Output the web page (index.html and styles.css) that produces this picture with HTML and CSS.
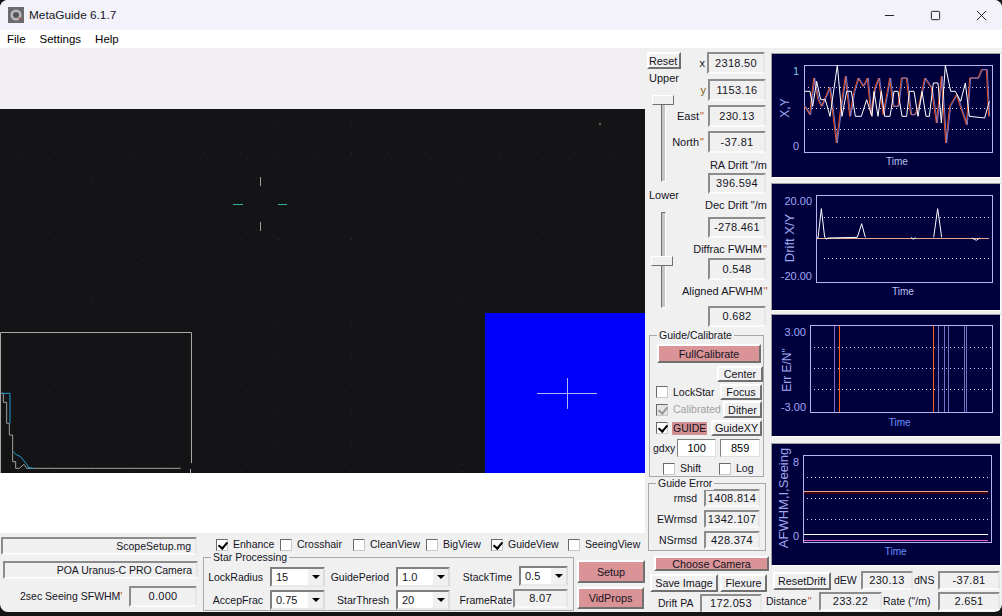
FILE: index.html
```html
<!DOCTYPE html>
<html>

<head>
    <title>MetaGuide 6.1.7</title>
    <link rel="stylesheet" href="styles.css">
</head>

<body>
    <div class="window">
        <div class="titlebar">
            <svg class="app-icon" viewBox="0 0 16 16" aria-hidden="true">
                <rect width="16" height="16" fill="#6b6b6d"></rect>
                <circle cx="8" cy="8" r="5.5" fill="#b9b9bb"></circle>
                <circle cx="8" cy="8" r="3" fill="#58585a"></circle>
                <circle cx="11.5" cy="11.5" r="1" fill="#c04040"></circle>
            </svg>
            <span class="app-title">MetaGuide 6.1.7</span>
            <div class="window-buttons">
                <span class="win-btn"><svg viewBox="0 0 12 12" aria-hidden="true"><path d="M1 6h10"></path></svg></span>
                <span class="win-btn"><svg viewBox="0 0 12 12" aria-hidden="true"><rect x="1.5" y="1.5" width="9" height="9" rx="1"></rect></svg></span>
                <span class="win-btn"><svg viewBox="0 0 12 12" aria-hidden="true"><path d="M1 1l10 10M11 1L1 11"></path></svg></span>
            </div>
        </div>
        <div class="menubar">
            <span>File</span>
            <span>Settings</span>
            <span>Help</span>
        </div>

        <div class="workarea">
            <div class="left-col">
                <div class="top-gap"></div>
                <div class="video">
                    <svg class="video-overlay" viewBox="0 0 645 364" aria-hidden="true">
                        <circle cx="600" cy="15" r="1.2" fill="#55655a"></circle>
                        <path class="reticle-v" d="M260.5 68v9M260.5 113v9"></path>
                        <path class="reticle-h" d="M233 95.5h10M278 95.5h9"></path>
                        <path class="hist-frame" d="M.5 364V223.5H191.5V354M190.5 360v4"></path>
                        <g transform="translate(0 216) scale(.3333)">
                            <polyline class="hist-gray" points="0,205 10,205 10,232 20,232 20,295 28,295 28,330 38,330 38,410 47,410 47,430 58,430 72,418 80,430 100,430 542,430"></polyline>
                            <polyline class="hist-blue" points="5,205 30,205 30,295"></polyline>
                            <polyline class="hist-blue" points="40,380 50,390 62,395 72,408 82,420 85,428 100,430"></polyline>
                        </g>
                    </svg>
                    <div class="guide-view">
                        <svg viewBox="0 0 160 160" aria-hidden="true">
                            <path d="M52 80.5h60M82.5 65v31"></path>
                        </svg>
                    </div>
                </div>
                <div class="white-gap"></div>
                <div class="bottom-panel">
                    <div class="status-col">
                        <div class="sunken status-line scope-line">ScopeSetup.mg</div>
                        <div class="sunken status-line camera-line">POA Uranus-C PRO Camera</div>
                        <div class="seeing-row">
                            <span>2sec Seeing SFWHM<span class="arc">"</span></span>
                            <div class="sunken value seeing-box">0.000</div>
                        </div>
                    </div>
                    <div class="options-col">
                        <div class="check-row">
                            <label class="check"><input type="checkbox" checked> Enhance</label>
                            <label class="check"><input type="checkbox"> Crosshair</label>
                            <label class="check"><input type="checkbox"> CleanView</label>
                            <label class="check"><input type="checkbox"> BigView</label>
                            <label class="check"><input type="checkbox" checked> GuideView</label>
                            <label class="check"><input type="checkbox"> SeeingView</label>
                        </div>
                        <div class="process-row">
                            <div class="group star-group">
                                <span class="group-title">Star Processing</span>
                                <div class="star-grid">
                                    <span>LockRadius</span>
                                    <div class="combo"><span>15</span><i></i></div>
                                    <span>GuidePeriod</span>
                                    <div class="combo"><span>1.0</span><i></i></div>
                                    <span>StackTime</span>
                                    <div class="combo combo-stack"><span>0.5</span><i></i></div>
                                    <span>AccepFrac</span>
                                    <div class="combo"><span>0.75</span><i></i></div>
                                    <span>StarThresh</span>
                                    <div class="combo"><span>20</span><i></i></div>
                                    <span>FrameRate</span>
                                    <div class="sunken value frame-box">8.07</div>
                                </div>
                            </div>
                            <div class="setup-col">
                                <button class="btn pink setup-btn">Setup</button>
                                <button class="btn pink vidprops-btn">VidProps</button>
                            </div>
                        </div>
                    </div>
                </div>
            </div>

            <div class="mid-col">
                <div class="mid-top">
                    <div class="slider-col">
                        <button class="btn reset-btn">Reset</button>
                        <div class="slider-label upper-label">Upper</div>
                        <div class="slider slider-upper"><span class="thumb"></span></div>
                        <div class="slider-label lower-label">Lower</div>
                        <div class="slider slider-lower"><span class="thumb"></span></div>
                    </div>
                    <div class="readouts">
                        <div class="readout-row row-x"><span>x</span><div class="sunken value">2318.50</div></div>
                        <div class="readout-row row-y"><span class="tinted">y</span><div class="sunken value">1153.16</div></div>
                        <div class="readout-row row-east"><span>East <span class="arc">"</span></span><div class="sunken value">230.13</div></div>
                        <div class="readout-row row-north"><span>North <span class="arc">"</span></span><div class="sunken value">-37.81</div></div>
                        <div class="readout-label label-ra">RA Drift "/m</div>
                        <div class="sunken value stat-box box-ra">396.594</div>
                        <div class="readout-label label-dec">Dec Drift "/m</div>
                        <div class="sunken value stat-box box-dec">-278.461</div>
                        <div class="readout-label label-diff">Diffrac FWHM <span class="arc">"</span></div>
                        <div class="sunken value stat-box box-diff">0.548</div>
                        <div class="readout-label label-aligned">Aligned AFWHM <span class="arc">"</span></div>
                        <div class="sunken value stat-box box-aligned">0.682</div>
                    </div>
                </div>

                <div class="group guide-group">
                    <span class="group-title">Guide/Calibrate</span>
                    <button class="btn pink full-btn">FullCalibrate</button>
                    <div class="guide-row center-row"><button class="btn center-btn">Center</button></div>
                    <div class="guide-row lock-row">
                        <label class="check"><input type="checkbox"> LockStar</label>
                        <button class="btn focus-btn">Focus</button>
                    </div>
                    <div class="guide-row calibrated-row">
                        <label class="check check-off"><input type="checkbox" checked disabled> Calibrated</label>
                        <button class="btn dither-btn">Dither</button>
                    </div>
                    <div class="guide-row guide-on-row">
                        <label class="check"><input type="checkbox" checked> <span class="guide-flag">GUIDE</span></label>
                        <button class="btn guidexy-btn">GuideXY</button>
                    </div>
                    <div class="guide-row gdxy-row">
                        <span>gdxy</span>
                        <input class="num-input" type="text" value="100">
                        <input class="num-input" type="text" value="859">
                    </div>
                    <div class="guide-row shift-row">
                        <label class="check"><input type="checkbox"> Shift</label>
                        <label class="check"><input type="checkbox"> Log</label>
                    </div>
                </div>

                <div class="group error-group">
                    <span class="group-title">Guide Error</span>
                    <div class="error-row rmsd-row"><span>rmsd</span><div class="sunken value">1408.814</div></div>
                    <div class="error-row"><span>EWrmsd</span><div class="sunken value">1342.107</div></div>
                    <div class="error-row"><span>NSrmsd</span><div class="sunken value">428.374</div></div>
                </div>

                <button class="btn pink camera-btn">Choose Camera</button>
                <div class="save-row">
                    <button class="btn save-btn">Save Image</button>
                    <button class="btn flexure-btn">Flexure</button>
                </div>
                <div class="pa-row">
                    <span>Drift PA</span>
                    <div class="sunken value">172.053</div>
                </div>
            </div>

            <div class="chart-col">
                <div class="chart chart-xy">
                    <svg viewBox="12 28 684 369" aria-hidden="true">
                        <rect class="plot" x="110" y="62" width="563" height="260"></rect>
                        <path class="grid" d="M120 128H668M120 190H668M120 253H668"></path>
                        <polyline class="line-red" points="110,185 125,210 137,100 150,165 160,185 185,128 205,295 218,190 232,95 245,215 258,140 270,100 285,125 298,100 308,210 320,130 332,100 345,210 365,100 375,185 390,185 400,100 415,100 428,210 440,210 452,185 470,100 490,130 505,235 520,95 533,295 545,185 565,150 595,240 605,100 630,100 640,75 655,75 662,215"></polyline>
                        <polyline class="line-lav" points="113,185 128,210 140,100 153,165 163,185 188,128 208,295 221,190 235,95 248,215 261,140 273,100 288,125 301,100 311,210 323,130 335,100 348,210 368,100 378,185 393,185 403,100 418,100 431,210 443,210 455,185 473,100 493,130 508,235 523,95 536,295 548,185 568,150 598,240 608,100 633,100 643,75 658,75 665,215"></polyline>
                        <polyline class="line-white" points="110,140 126,140 134,185 146,110 158,165 172,165 186,215 208,62 222,215 236,140 250,140 262,215 280,215 296,165 312,215 318,140 330,215 340,140 350,215 366,215 378,140 390,140 402,215 416,215 424,140 438,140 450,215 462,140 474,215 484,215 496,115 510,115 520,235 532,62 548,140 562,140 578,170 592,115 604,215 650,220 664,170"></polyline>
                        <text class="tick tick-teal" x="93" y="92" text-anchor="end">1</text>
                        <text class="tick" x="93" y="315" text-anchor="end">0</text>
                        <text class="axis" transform="translate(62 190) rotate(-90)" text-anchor="middle">X,Y</text>
                        <text class="time time-pale" x="387" y="362" text-anchor="middle">Time</text>
                    </svg>
                </div>
                <div class="chart chart-drift">
                    <svg viewBox="12 418 684 378" aria-hidden="true">
                        <rect class="plot" x="145" y="452" width="528" height="260"></rect>
                        <path class="grid" d="M168 517H665M168 642H665"></path>
                        <path class="line-pale" d="M147 580H662"></path>
                        <polyline class="line-white" points="147,580 150,580 160,492 170,578 176,583 180,580 268,578 281,537 292,578"></polyline>
                        <polyline class="line-white" points="430,578 436,584 442,578"></polyline>
                        <polyline class="line-white" points="497,578 509,492 521,578"></polyline>
                        <polyline class="line-white" points="612,580 625,587 635,580"></polyline>
                        <text class="tick" x="132" y="482" text-anchor="end">20.00</text>
                        <text class="tick" x="132" y="706" text-anchor="end">-20.00</text>
                        <text class="axis axis-large" transform="translate(78 580) rotate(-90)" text-anchor="middle">Drift X/Y</text>
                        <text class="time time-pale" x="405" y="752" text-anchor="middle">Time</text>
                    </svg>
                </div>
                <div class="chart chart-err">
                    <svg viewBox="12 15 684 363" aria-hidden="true">
                        <rect class="plot" x="127" y="47" width="546" height="260"></rect>
                        <path class="grid" d="M138 112H670M138 175H670M138 238H670"></path>
                        <path class="line-lav" d="M199 47V307M511 47V307M529 47V307M541 47V307M590 47V307M595 47V307"></path>
                        <path class="line-red line-bold" d="M214 47V307M496 47V307"></path>
                        <text class="tick" x="114" y="78" text-anchor="end">3.00</text>
                        <text class="tick" x="114" y="302" text-anchor="end">-3.00</text>
                        <text class="axis" transform="translate(70 180) rotate(-90)" text-anchor="middle">Err E/N"</text>
                        <text class="time" x="395" y="348" text-anchor="middle">Time</text>
                    </svg>
                </div>
                <div class="chart chart-seeing">
                    <svg viewBox="12 403 684 363" aria-hidden="true">
                        <rect class="plot" x="107" y="437" width="563" height="260"></rect>
                        <path class="grid" d="M118 502H665M118 565H665M118 628H665"></path>
                        <path class="line-shadow" d="M107 549H660"></path>
                        <path class="line-pale" d="M107 545H660"></path>
                        <path class="line-white" d="M107 673H660"></path>
                        <path class="line-pink" d="M107 693H660"></path>
                        <text class="tick" x="93" y="468" text-anchor="end">8</text>
                        <text class="tick" x="93" y="692" text-anchor="end">0</text>
                        <text class="axis axis-large" transform="translate(60 565) rotate(-90)" text-anchor="middle">AFWHM,I,Seeing</text>
                        <text class="time" x="383" y="737" text-anchor="middle">Time</text>
                    </svg>
                </div>

                <div class="drift-row drift-top">
                    <button class="btn reset-drift">ResetDrift</button>
                    <span class="dew-label">dEW</span>
                    <div class="sunken value dew-box">230.13</div>
                    <span class="dns-label">dNS</span>
                    <div class="sunken value dns-box">-37.81</div>
                </div>
                <div class="drift-row drift-bottom">
                    <span class="distance-label">Distance <span class="arc">"</span></span>
                    <div class="sunken value distance-box">233.22</div>
                    <span class="rate-label">Rate ("/m)</span>
                    <div class="sunken value dns-box">2.651</div>
                </div>
            </div>
        </div>
    </div>
</body>

</html>
```

FILE: styles.css
```css
* {
    box-sizing: border-box;
}

body {
    margin: 0;
    background-color: #141414;
    font-family: "Liberation Sans", Arial, sans-serif;
    font-size: 10.5px;
    line-height: 13px;
    color: #14141e;
}

.window {
    display: flex;
    flex-direction: column;
    width: 1002px;
    height: 612px;
    overflow: hidden;
    background-color: #f0f0f0;
    border-radius: 8px;
}

/* title and menu */
.titlebar {
    display: flex;
    flex: none;
    align-items: center;
    height: 30px;
    padding-left: 8px;
    background-color: #f3f2fa;
    font-size: 11.8px;
}

.app-icon {
    width: 16px;
    height: 16px;
}

.app-title {
    margin-left: 5px;
}

.window-buttons {
    display: flex;
    margin-left: auto;
    margin-right: -2px;
}

.win-btn {
    display: flex;
    justify-content: center;
    align-items: center;
    width: 46px;
    height: 30px;
}

.win-btn svg {
    width: 11px;
    height: 11px;
    fill: none;
    stroke: #111;
    stroke-width: 1;
}

.menubar {
    display: flex;
    flex: none;
    align-items: center;
    gap: 14px;
    height: 18px;
    padding-left: 7px;
    background-color: #ffffff;
    font-size: 11.5px;
    color: #000;
}

.workarea {
    display: flex;
    flex: 1;
    min-height: 0;
}

/* video side */
.left-col {
    display: flex;
    flex: none;
    flex-direction: column;
    width: 645px;
}

.top-gap {
    flex: none;
    height: 61px;
    background-color: #f0eef0;
}

.video {
    position: relative;
    flex: none;
    height: 364px;
    background-color: #141416;
    background-image:
        radial-gradient(circle, rgba(130, 130, 130, 0.22) 0.5px, transparent 1px),
        radial-gradient(circle, rgba(110, 110, 110, 0.16) 0.5px, transparent 1px),
        radial-gradient(circle, rgba(90, 90, 90, 0.16) 0.5px, transparent 1px),
        radial-gradient(circle, rgba(100, 100, 100, 0.14) 0.5px, transparent 1px);
    background-size: 37px 29px, 53px 41px, 23px 61px, 71px 17px;
    background-position: 0 0, 11px 7px, 5px 19px, 31px 3px;
}

.video-overlay {
    position: absolute;
    top: 0;
    left: 0;
    width: 645px;
    height: 364px;
}

.video-overlay path,
.video-overlay polyline {
    fill: none;
}

.reticle-v {
    stroke: #9a9a9a;
}

.reticle-h {
    stroke: #30b0a0;
}

.hist-frame {
    stroke: #a8a8a8;
}

.hist-gray {
    stroke: #a0a0a0;
    stroke-width: 3;
}

.hist-blue {
    stroke: #22a0d0;
    stroke-width: 3;
}

.guide-view {
    position: absolute;
    right: 0;
    bottom: 0;
    width: 160px;
    height: 160px;
    background-color: #0000fa;
}

.guide-view svg {
    display: block;
    width: 160px;
    height: 160px;
    fill: none;
    stroke: #b4b4ea;
}

.white-gap {
    flex: none;
    height: 60px;
    background-color: #ffffff;
}

/* bottom left panel */
.bottom-panel {
    display: flex;
    flex: 1;
}

.status-col {
    flex: none;
    width: 203px;
    padding-top: 4px;
}

.status-line {
    height: 18px;
    padding-right: 4px;
    text-align: right;
    line-height: 15px;
}

.scope-line {
    width: 196px;
    margin-left: 1px;
}

.camera-line {
    width: 195px;
    margin-top: 6px;
    margin-left: 3px;
}

.seeing-row {
    display: flex;
    align-items: center;
    margin-top: 7px;
    padding-left: 20px;
    white-space: nowrap;
}

.seeing-row > span {
    flex: none;
    width: 109px;
}

.seeing-box {
    width: 68px;
    height: 21px;
}

.options-col {
    flex: none;
    width: 442px;
}

.check-row {
    display: grid;
    grid-template-columns: 64px 73px 73px 65px 77px auto;
    align-items: start;
    height: 24px;
    padding-top: 5px;
    padding-left: 13px;
}

.process-row {
    display: flex;
    align-items: flex-start;
}

.star-group {
    flex: none;
    width: 371px;
    height: 54px;
}

.star-grid {
    display: grid;
    grid-template-columns: 66px 55px 71px 54px 69px 49px;
    grid-template-rows: 20px 20px;
    row-gap: 3px;
    align-items: center;
    margin-top: 9px;
    white-space: nowrap;
}

.star-grid > span {
    padding-right: 7px;
    text-align: right;
}

.combo {
    display: flex;
    align-items: center;
    justify-content: space-between;
    height: 20px;
    padding-left: 4px;
    background-color: #ffffff;
    border: 2px solid;
    border-color: #808080 #dcdcdc #e8e8e8 #808080;
    font-size: 11px;
}

.combo i {
    display: flex;
    justify-content: center;
    align-items: center;
    width: 15px;
    height: 16px;
    background-color: #f0f0f0;
}

.combo i::after {
    content: "";
    border-top: 4px solid #000;
    border-left: 4px solid transparent;
    border-right: 4px solid transparent;
}

.combo-stack {
    margin-top: -2px;
}

.frame-box {
    width: 55px;
    height: 19px;
    margin-left: -6px;
    margin-top: -3px;
}

.setup-col {
    display: flex;
    flex-direction: column;
    margin-left: 3px;
    margin-top: 3px;
}

.setup-btn {
    width: 68px;
    height: 23px;
}

.vidprops-btn {
    width: 67px;
    height: 22px;
    margin-top: 4px;
}

/* shared widgets */
.btn {
    flex: none;
    padding: 0;
    background-color: #f0f0f0;
    border: 2px solid;
    border-color: #ffffff #707070 #707070 #ffffff;
    font-family: inherit;
    font-size: 10.8px;
    line-height: 12px;
    color: #14141e;
}

.pink {
    background-color: #da9396;
}

.sunken {
    background-color: #f0f0f0;
    border: 2px solid;
    border-color: #8c8c8c #e6e6e6 #fafafa #8c8c8c;
}

.value {
    display: flex;
    flex: none;
    justify-content: center;
    align-items: center;
    letter-spacing: 0.3px;
    font-size: 11px;
}

.arc {
    margin-left: -2px;
    color: #b85a28;
}

.tinted {
    color: #806020;
}

.group {
    position: relative;
    border: 1px solid #a8a8a8;
}

.group-title {
    position: absolute;
    top: -7px;
    left: 7px;
    padding: 0 2px;
    background-color: #f0f0f0;
}

.check {
    display: flex;
    align-items: center;
    gap: 5px;
    white-space: nowrap;
}

.check input {
    position: relative;
    flex: none;
    width: 12px;
    height: 12px;
    margin: 0;
    appearance: none;
    background-color: #ffffff;
    border: 1px solid;
    border-color: #6a6a6a #c8c8c8 #c8c8c8 #6a6a6a;
}

.check input:checked::after {
    content: "";
    position: absolute;
    top: 0;
    left: 3px;
    width: 4px;
    height: 7px;
    border: solid #000;
    border-width: 0 2px 2px 0;
    transform: rotate(40deg);
}

.check-off {
    color: #a0a0a0;
}

.check-off input {
    background-color: #e4e4e4;
}

.check-off input:checked::after {
    border-color: #9a9a9a;
}

/* middle column */
.mid-col {
    flex: none;
    width: 124px;
}

.mid-top {
    display: flex;
}

.slider-col {
    flex: none;
    width: 37px;
    padding-top: 4px;
}

.reset-btn {
    display: block;
    width: 34px;
    height: 17px;
    margin-left: 2px;
    padding-right: 3px;
}

.slider-label {
    padding-left: 4px;
    font-size: 11px;
}

.upper-label {
    margin-top: 3px;
}

.lower-label {
    margin-top: 7px;
}

.slider {
    position: relative;
}

.slider::before {
    content: "";
    position: absolute;
    top: 0;
    bottom: 0;
    left: 16px;
    width: 3px;
    background-color: #c4c4c4;
    border: 1px solid;
    border-color: #707070 #ffffff #ffffff #707070;
}

.thumb {
    position: absolute;
    left: 7px;
    width: 22px;
    height: 10px;
    background-color: #f0f0f0;
    border: 1px solid;
    border-color: #ffffff #707070 #707070 #ffffff;
}

.slider-upper {
    height: 87px;
    margin-top: 10px;
}

.slider-upper .thumb {
    top: 0;
}

.slider-lower {
    height: 96px;
    margin-top: 10px;
}

.slider-lower .thumb {
    top: 44px;
    left: 6px;
}

.readouts {
    flex: none;
    width: 87px;
    padding-top: 4px;
    white-space: nowrap;
    font-size: 11px;
}

.readout-row {
    display: flex;
    justify-content: flex-end;
    align-items: center;
    gap: 4px;
    height: 22px;
    padding-right: 3px;
}

.readout-row .value {
    width: 58px;
    height: 22px;
}

.row-x {
    gap: 2px;
    padding-right: 4px;
}

.row-y {
    gap: 2px;
    margin-top: 5px;
}

.row-east,
.row-north {
    margin-top: 4px;
}

.readout-label {
    padding-right: 2px;
    text-align: right;
}

.stat-box {
    width: 58px;
    margin-left: 26px;
}

.label-ra {
    margin-top: 6px;
    height: 14px;
}

.box-ra {
    height: 21px;
}

.label-dec {
    margin-top: 4px;
    height: 19px;
    padding-top: 1px;
}

.box-dec {
    height: 21px;
}

.label-diff {
    margin-top: 4px;
    height: 16px;
    padding-top: 1px;
}

.box-diff {
    height: 22px;
}

.label-aligned {
    margin-top: 5px;
    height: 21px;
}

.box-aligned {
    height: 21px;
}

.guide-group {
    width: 115px;
    height: 142px;
    margin-top: 8px;
    margin-left: 4px;
}

.full-btn {
    display: block;
    width: 104px;
    height: 19px;
    margin-top: 8px;
    margin-left: 7px;
}

.guide-row {
    display: flex;
    justify-content: space-between;
    align-items: center;
    padding-left: 6px;
    padding-right: 1px;
}

.center-row {
    justify-content: flex-end;
    height: 16px;
    margin-top: 3px;
    padding-right: 0;
}

.center-btn {
    width: 46px;
    height: 16px;
}

.lock-row {
    height: 16px;
    margin-top: 2px;
}

.focus-btn {
    width: 42px;
    height: 16px;
}

.calibrated-row {
    height: 17px;
    margin-top: 1px;
}

.dither-btn {
    width: 39px;
    height: 17px;
}

.guide-on-row {
    height: 16px;
    margin-top: 2px;
}

.guide-flag {
    margin-left: -1px;
    padding: 0 1px;
    background-color: #d09093;
}

.guidexy-btn {
    width: 51px;
    height: 16px;
}

.gdxy-row {
    justify-content: flex-start;
    gap: 2px;
    height: 18px;
    margin-top: 3px;
    padding-left: 3px;
}

.num-input {
    flex: none;
    width: 39px;
    height: 18px;
    padding: 0;
    background-color: #ffffff;
    border: 1px solid;
    border-color: #808080 #e0e0e0 #e0e0e0 #808080;
    text-align: center;
    font-family: inherit;
    font-size: 11px;
}

.num-input + .num-input {
    width: 40px;
    margin-left: 2px;
}

.shift-row {
    justify-content: flex-start;
    gap: 18px;
    margin-top: 5px;
    padding-left: 13px;
}

.error-group {
    width: 118px;
    height: 68px;
    margin-top: 6px;
    margin-left: 3px;
}

.error-row {
    display: flex;
    justify-content: flex-end;
    align-items: center;
    gap: 7px;
    height: 18px;
    padding-right: 5px;
    margin-top: 3px;
}

.rmsd-row {
    margin-top: 5px;
}

.error-row .value {
    width: 56px;
    height: 18px;
}

.camera-btn {
    display: block;
    width: 115px;
    height: 15px;
    margin-top: 5px;
    margin-left: 9px;
}

.save-row {
    display: flex;
    gap: 2px;
    margin-top: 3px;
    margin-left: 5px;
}

.save-btn {
    width: 68px;
    height: 18px;
}

.flexure-btn {
    width: 47px;
    height: 18px;
}

.pa-row {
    display: flex;
    align-items: center;
    gap: 5px;
    margin-top: 2px;
    padding-left: 13px;
    white-space: nowrap;
}

.pa-row > span {
    flex: none;
    width: 37px;
}

.pa-row .value {
    width: 62px;
    height: 19px;
}

/* charts */
.chart-col {
    flex: none;
    width: 233px;
    padding-top: 5px;
}

.chart {
    width: 230px;
    margin-left: 2px;
    background-color: #00003c;
    border: 1px solid;
    border-color: #a0a0a0 #ffffff #ffffff #a0a0a0;
}

.chart svg {
    display: block;
    width: 228px;
    height: 100%;
    fill: none;
}

.chart path,
.plot {
    shape-rendering: crispEdges;
}

.chart-xy {
    height: 125px;
}

.chart-drift {
    height: 128px;
    margin-top: 5px;
}

.chart-err {
    height: 123px;
    margin-top: 3px;
}

.chart-seeing {
    height: 123px;
    margin-top: 6px;
}

.plot {
    stroke: #b4b4f0;
    stroke-width: 3;
}

.grid {
    stroke: #d8d8f0;
    stroke-width: 3;
    stroke-dasharray: 3 9;
}

.line-red {
    stroke: #f05010;
    stroke-width: 3;
}

.line-bold {
    stroke: #ff5a10;
    stroke-width: 5;
}

.line-lav {
    stroke: #8a8ae0;
    stroke-width: 2.5;
}

.line-white {
    stroke: #ffffff;
    stroke-width: 3;
}

.line-pale {
    stroke: #e8a890;
    stroke-width: 3;
}

.line-shadow {
    stroke: #400010;
    stroke-width: 6;
}

.line-pink {
    stroke: #f060d0;
    stroke-width: 4;
}

.chart text {
    font-family: "Liberation Sans", Arial, sans-serif;
    stroke: none;
}

.tick {
    fill: #a0a8f8;
    font-size: 33px;
}

.tick-teal {
    fill: #80c8d8;
}

.axis {
    fill: #a0a8f0;
    font-size: 36px;
}

.axis-large {
    font-size: 39px;
}

.time {
    fill: #6a90ff;
    font-size: 30px;
}

.time-pale {
    fill: #b8c4f0;
}

/* drift rows */
.drift-row {
    display: flex;
    align-items: center;
    white-space: nowrap;
}

.drift-top {
    margin-top: 5px;
    margin-left: 4px;
}

.reset-drift {
    width: 58px;
    height: 18px;
}

.dew-label {
    flex: none;
    width: 30px;
    padding-left: 3px;
}

.dew-box {
    width: 52px;
    height: 19px;
}

.dns-label {
    flex: none;
    width: 25px;
    padding-left: 1px;
}

.dns-box {
    width: 62px;
    height: 19px;
}

.drift-bottom {
    margin-top: 2px;
    margin-left: -3px;
}

.distance-label {
    flex: none;
    width: 53px;
}

.distance-box {
    width: 63px;
    height: 19px;
}

.rate-label {
    flex: none;
    width: 56px;
    padding-left: 1px;
}
```
